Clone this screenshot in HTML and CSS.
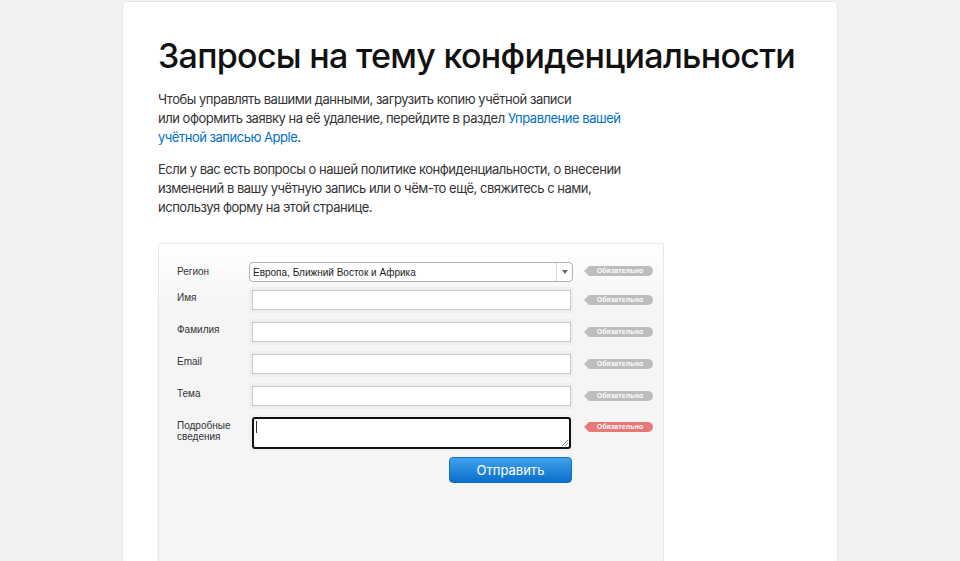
FILE: index.html
```html
<!DOCTYPE html>
<html lang="ru">
<head>
<meta charset="utf-8">
<title>Запросы на тему конфиденциальности</title>
<link rel="stylesheet" href="styles.css">
</head>
<body>
<main class="card">
  <h1 class="title">Запросы на тему конфиденциальности</h1>
  <p class="text">Чтобы управлять вашими данными, загрузить копию учётной записи<br>или оформить заявку на её удаление, перейдите в раздел <a href="#" class="link">Управление вашей учётной записью Apple</a>.</p>
  <p class="text">Если у вас есть вопросы о нашей политике конфиденциальности, о внесении изменений в вашу учётную запись или о чём-то ещё, свяжитесь с нами, используя форму на этой странице.</p>

  <form class="form">
    <div class="row row-select">
      <label class="label">Регион</label>
      <div class="select">
        <span class="select-value">Европа, Ближний Восток и Африка</span>
        <span class="select-arrow"></span>
      </div>
      <span class="badge">Обязательно</span>
    </div>
    <div class="row">
      <label class="label">Имя</label>
      <div class="field"><input class="input" type="text"></div>
      <span class="badge">Обязательно</span>
    </div>
    <div class="row">
      <label class="label">Фамилия</label>
      <div class="field"><input class="input" type="text"></div>
      <span class="badge">Обязательно</span>
    </div>
    <div class="row">
      <label class="label">Email</label>
      <div class="field"><input class="input" type="text"></div>
      <span class="badge">Обязательно</span>
    </div>
    <div class="row">
      <label class="label">Тема</label>
      <div class="field"><input class="input" type="text"></div>
      <span class="badge">Обязательно</span>
    </div>
    <div class="row row-area">
      <label class="label">Подробные<br>сведения</label>
      <div class="field field-area"><div class="textarea"><span class="caret"></span><span class="grip"></span></div></div>
      <span class="badge badge-error">Обязательно</span>
    </div>
    <div class="actions">
      <button type="button" class="button">Отправить</button>
    </div>
  </form>
</main>
</body>
</html>
```

FILE: styles.css
```css
* { box-sizing: border-box; }
html, body { margin: 0; padding: 0; }
body {
  background: #f2f2f2;
  height: 561px;
  overflow: hidden;
  font-family: "Inter", "Liberation Sans", sans-serif;
}
.card {
  width: 716px;
  margin: 1px auto 0;
  background: #fff;
  border: 1px solid #e6e6e6;
  border-radius: 4px;
  padding: 33px 0 0 35px;
  min-height: 620px;
}
.title {
  margin: 0;
  font-size: 34px;
  font-weight: 500;
  letter-spacing: -0.7px;
  color: #111;
  line-height: 42px;
}
.text {
  margin: 13px 0 0;
  font-size: 13px;
  line-height: 19px;
  color: #333;
  width: 470px;
  letter-spacing: -0.48px;
}
.text + .text { margin-top: 13px; }
.link { color: #0070c9; text-decoration: none; }

.form {
  margin-top: 26px;
  width: 506px;
  min-height: 340px;
  border: 1px solid #e8e8e8;
  border-radius: 2px;
  background: linear-gradient(#fff 0, #f5f5f5 60px, #f5f5f5 100%);
  padding: 18px 0 0 18px;
  font-family: "Liberation Sans", Arial, sans-serif;
}
.row {
  display: flex;
  align-items: flex-start;
  margin-bottom: 6px;
}
.row-select { margin-bottom: 5px; }
.label {
  width: 72px;
  font-size: 10px;
  color: #333;
  padding-top: 5px;
  line-height: 11px;
}
.row-select .label { padding-top: 4px; }
.select {
  width: 324px;
  height: 20px;
  border: 1px solid #b0b0b0;
  border-radius: 4px;
  background: #fff;
  display: flex;
  align-items: center;
  font-size: 10px;
  color: #222;
}
.select-value { flex: 1; padding-left: 3px; }
.select-arrow {
  width: 16px;
  height: 18px;
  border-left: 1px solid #d5d5d5;
  position: relative;
}
.select-arrow::after {
  content: "";
  position: absolute;
  left: 5px;
  top: 7px;
  border-left: 3px solid transparent;
  border-right: 3px solid transparent;
  border-top: 4px solid #666;
}
.field {
  width: 324px;
  height: 26px;
  background: #efefef;
  border-radius: 3px;
  padding: 3px 2px 3px 3px;
}
.input {
  display: block;
  width: 100%;
  height: 20px;
  border: 1px solid #c8c8c8;
  background: #fff;
  margin: 0;
  padding: 0;
}
.field-area { height: 36px; padding: 2px 2px 2px 3px; }
.textarea {
  position: relative;
  height: 32px;
  border: 2px solid #111;
  border-radius: 3px;
  background: #fff;
}
.caret {
  position: absolute;
  left: 2px;
  top: 2px;
  width: 1px;
  height: 12px;
  background: #333;
}
.grip {
  position: absolute;
  right: 1px;
  bottom: 1px;
  width: 6px;
  height: 6px;
  background: linear-gradient(135deg, transparent 45%, #888 45%, #888 55%, transparent 55%, transparent 70%, #888 70%, #888 80%, transparent 80%);
}
.badge {
  position: relative;
  margin-left: 16px;
  margin-top: 8px;
  width: 64px;
  height: 10px;
  background: #bdbdbd;
  border-radius: 0 5px 5px 0;
  color: #fff;
  font-size: 7px;
  font-weight: bold;
  line-height: 10px;
  text-align: center;
  padding-right: 2px;
  letter-spacing: 0.1px;
}
.badge::before {
  content: "";
  position: absolute;
  left: -5px;
  top: 0;
  border-top: 5px solid transparent;
  border-bottom: 5px solid transparent;
  border-right: 5px solid #bdbdbd;
}
.row-select .badge { margin-top: 4px; }
.row-area .badge { margin-top: 7px; }
.badge-error { background: #e87777; }
.badge-error::before { border-right-color: #e87777; }
.actions {
  display: flex;
  justify-content: flex-end;
  width: 395px;
  margin-top: 5px;
}
.button {
  width: 123px;
  height: 26px;
  border: 1px solid #0b6fc4;
  border-radius: 4px;
  background: linear-gradient(#41a1ec, #0a6fcb);
  color: #fff;
  font-family: "Inter", "Liberation Sans", sans-serif;
  font-size: 13px;
  padding: 0;
}
```
